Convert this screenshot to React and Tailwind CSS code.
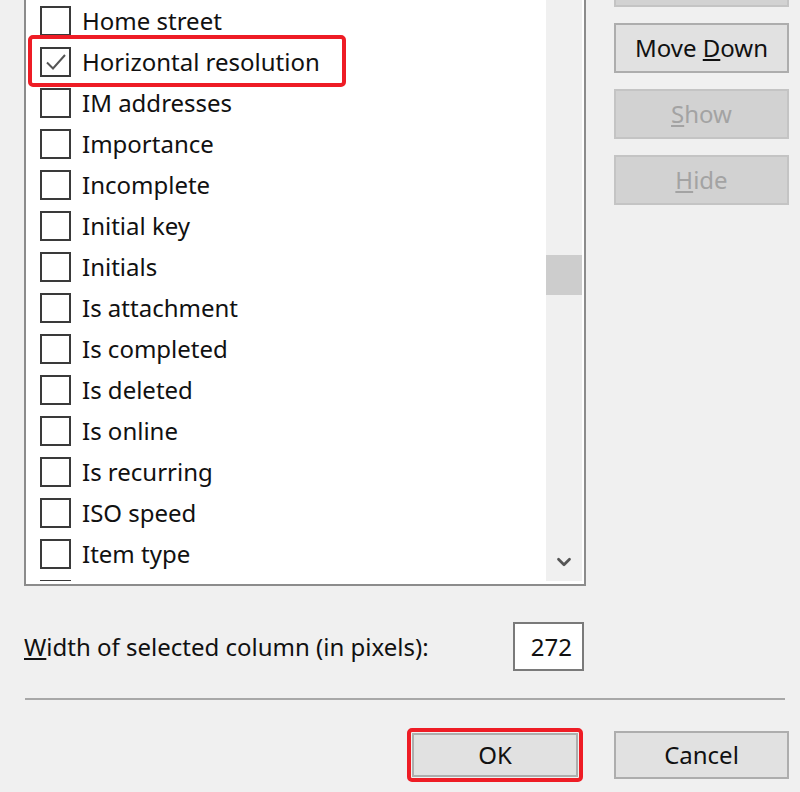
import { ChevronDown } from 'lucide-react';

const items = [
  { label: 'Home street' },
  { label: 'Horizontal resolution', checked: true, marked: true },
  { label: 'IM addresses' },
  { label: 'Importance' },
  { label: 'Incomplete' },
  { label: 'Initial key' },
  { label: 'Initials' },
  { label: 'Is attachment' },
  { label: 'Is completed' },
  { label: 'Is deleted' },
  { label: 'Is online' },
  { label: 'Is recurring' },
  { label: 'ISO speed' },
  { label: 'Item type' },
  { label: '' },
];

function CheckBox({ checked }) {
  return (
    <div className="w-[31px] h-[30px] shrink-0 border-2 border-[#3a3a3a] bg-white flex items-center justify-center">
      {checked && (
        <svg width="24" height="24" viewBox="0 0 24 24" fill="none">
          <path d="M3 12.5 L9 18.5 L21 5" stroke="#555" strokeWidth="2" />
        </svg>
      )}
    </div>
  );
}

function Row({ item }) {
  return (
    <div className="h-[41px] shrink-0 flex items-center relative">
      <CheckBox checked={item.checked} />
      <span className="ml-[11px] whitespace-nowrap">{item.label}</span>
      {item.marked && (
        <div className="absolute left-[-12px] top-[-6px] w-[318px] h-[52px] border-[4px] border-[#ee1c25] rounded-[5px]" />
      )}
    </div>
  );
}

function SideButton({ children, disabled }) {
  return (
    <div
      className={
        disabled
          ? 'h-[50px] shrink-0 border-2 border-[#c4c4c4] bg-[#d2d2d2] text-[#a3a3a3] flex items-center justify-center'
          : 'h-[50px] shrink-0 border-2 border-[#adadad] bg-[#e1e1e1] text-[#111] flex items-center justify-center'
      }
    >
      {children}
    </div>
  );
}

export default function App() {
  return (
    <div
      className="w-[800px] h-[792px] bg-[#f0f0f0] overflow-hidden text-[24px] text-[#111]"
      style={{ fontFamily: '"Noto Sans", "Open Sans", sans-serif' }}
    >
      {/* list + side buttons */}
      <div className="flex h-[586px] pl-[24px]">
        <div className="w-[562px] h-full border-2 border-t-0 border-[#8c8c8c] bg-white flex pr-[2px] pb-[3px]">
          <div className="flex-1 flex flex-col overflow-hidden pl-[14px] relative">
            {items.map((item, i) => (
              <Row key={i} item={item} />
            ))}
          </div>
          <div className="w-[36px] bg-[#f0f0f0] flex flex-col items-center relative">
            <div className="absolute left-0 top-[255px] w-full h-[40px] bg-[#cdcdcd]" />
            <div className="mt-auto mb-[8px] text-[#555]">
              <ChevronDown size={22} strokeWidth={3} />
            </div>
          </div>
        </div>
        <div className="ml-[28px] w-[175px] flex flex-col gap-[16px] -mt-[43px]">
          <SideButton disabled />
          <SideButton>
            <span>Move <u>D</u>own</span>
          </SideButton>
          <SideButton disabled>
            <span><u>S</u>how</span>
          </SideButton>
          <SideButton disabled>
            <span><u>H</u>ide</span>
          </SideButton>
        </div>
      </div>

      {/* width field */}
      <div className="mt-[36px] h-[49px] flex items-center pl-[24px]">
        <span className="w-[489px] whitespace-nowrap">
          <u>W</u>idth of selected column (in pixels):
        </span>
        <div className="w-[71px] h-[49px] border-2 border-[#7a7a7a] bg-white flex items-center justify-end pr-[10px]">
          272
        </div>
      </div>

      {/* separator */}
      <div className="mt-[27px] ml-[25px] w-[760px] h-[2px] bg-[#a8a8a8]" />

      {/* dialog buttons */}
      <div className="mt-[28px] flex items-center pl-[407px] gap-[31px]">
        <div className="w-[176px] h-[54px] border-[4px] border-[#ee1c25] rounded-[5px] flex items-center justify-center">
          <div className="w-[166px] h-[44px] border-2 border-[#adadad] bg-[#e1e1e1] flex items-center justify-center">
            OK
          </div>
        </div>
        <div className="w-[175px] h-[48px] border-2 border-[#adadad] bg-[#e1e1e1] flex items-center justify-center">
          Cancel
        </div>
      </div>
    </div>
  );
}
